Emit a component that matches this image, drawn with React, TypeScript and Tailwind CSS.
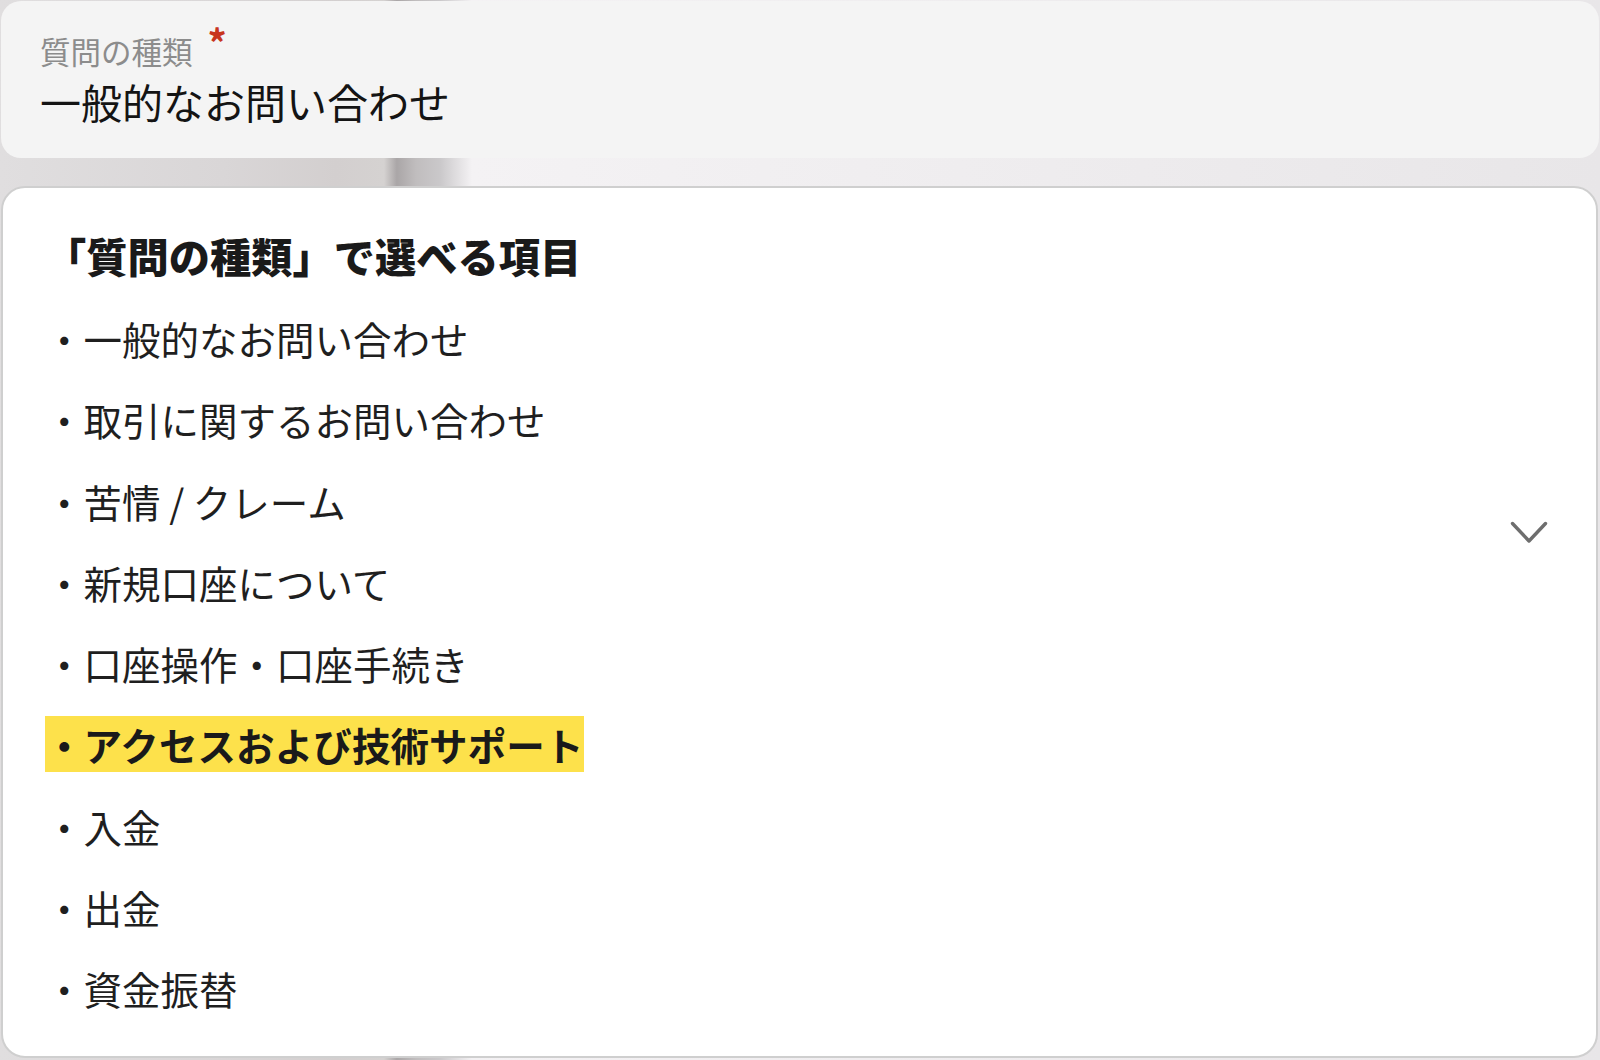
import { useState } from 'react'

const options = [
  '一般的なお問い合わせ',
  '取引に関するお問い合わせ',
  '苦情 / クレーム',
  '新規口座について',
  '口座操作・口座手続き',
  'アクセスおよび技術サポート',
  '入金',
  '出金',
  '資金振替',
]

export default function App() {
  const [selected] = useState('一般的なお問い合わせ')
  const highlighted = 'アクセスおよび技術サポート'

  return (
    <main
      className="w-[1600px] h-[1060px] overflow-hidden bg-[linear-gradient(90deg,#e0dedf_0%,#d9d6d7_14%,#d3cfcf_21%,#d5d2d1_24%,#aaa6a7_24.8%,#c0bdbe_26%,#cac8ca_27.5%,#f4f2f4_29.5%,#efedef_60%,#e8e6e8_100%)] flex flex-col"
      style={{ fontFamily: '"Noto Sans CJK JP", "Noto Sans", sans-serif' }}
    >
      {/* 選択中の値 */}
      <div className="mt-[1px] mx-[1px] h-[157px] rounded-[20px] bg-[#f4f4f4] px-[39px] pt-[30px]">
        <div className="flex items-start">
          <span className="text-[30.5px] leading-[40px] text-[#8c8c8c]">質問の種類</span>
          <span className="ml-[15px] mt-[-8px] text-[38px] leading-[38px] font-bold text-[#c8351d]">*</span>
        </div>
        <p className="mt-[4px] text-[41px] leading-[52px] text-[#141414]">{selected}</p>
      </div>

      <div className="h-[28px] shrink-0" />

      {/* 選択肢パネル */}
      <div className="relative ml-[1px] mr-[2px] h-[872px] rounded-[24px] border-2 border-[#cfcfcf] bg-white pl-[42px] pt-[37px]">
        <h2 className="text-[41.25px] leading-[60px] font-black text-[#1a1a1a]">「質問の種類」で選べる項目</h2>
        <ul className="mt-[13px]">
          {options.map((opt) => (
            <li key={opt} className="text-[38.5px] leading-[81.25px] text-[#1f1f1f]">
              {opt === highlighted ? (
                <span className="bg-[#fde14b] font-bold tracking-[0.1px] text-[#1a1a1a]">・{opt}</span>
              ) : (
                <span>・{opt}</span>
              )}
            </li>
          ))}
        </ul>

        <svg
          className="absolute top-[333px] right-[48px]"
          width="38"
          height="25"
          viewBox="0 0 38 25"
          fill="none"
        >
          <polyline
            points="2.5,2.5 19,20 35.5,2.5"
            stroke="#6e6e6e"
            strokeWidth="3.4"
            strokeLinecap="round"
            strokeLinejoin="round"
          />
        </svg>
      </div>
    </main>
  )
}
